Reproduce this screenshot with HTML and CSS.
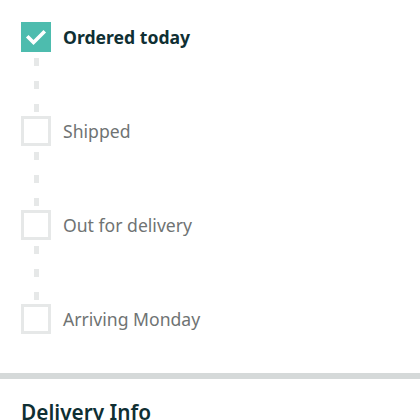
FILE: index.html
```html
<!DOCTYPE html>
<html>
<head>
<meta charset="utf-8">
<link rel="stylesheet" href="styles.css">
</head>
<body>
<div class="tracker">
  <div class="step done">
    <span class="box">
      <svg width="30" height="30" viewBox="0 0 30 30"><path d="M7.5 15.5 L12.5 20.5 L22.5 10.5" fill="none" stroke="#fff" stroke-width="3.6" stroke-linecap="square" stroke-linejoin="miter"/></svg>
    </span>
    <span class="label">Ordered today</span>
  </div>
  <div class="connector"></div>
  <div class="step">
    <span class="box"></span>
    <span class="label">Shipped</span>
  </div>
  <div class="connector"></div>
  <div class="step">
    <span class="box"></span>
    <span class="label">Out for delivery</span>
  </div>
  <div class="connector"></div>
  <div class="step">
    <span class="box"></span>
    <span class="label">Arriving Monday</span>
  </div>
</div>
<div class="divider"></div>
<h2 class="section-title">Delivery Info</h2>
</body>
</html>
```
FILE: styles.css
```css
html, body {
  margin: 0;
  padding: 0;
  background: #fff;
  font-family: "Noto Sans", "Open Sans", sans-serif;
}
.tracker {
  padding: 22px 0 0 21px;
  display: flex;
  flex-direction: column;
}
.step {
  display: flex;
  align-items: center;
  height: 30px;
}
.box {
  width: 30px;
  height: 30px;
  box-sizing: border-box;
  border: 3px solid #e6e8e8;
  background: #fff;
  flex: none;
}
.step.done .box {
  border: none;
  background: #4dbcae;
}
.box svg { display: block; }
.label {
  margin-left: 12px;
  font-size: 17.6px;
  color: #6f7373;
}
.step.done .label {
  font-weight: 700;
  color: #0f2f33;
}
.connector {
  width: 5px;
  height: 64px;
  margin-left: 12.5px;
  background: repeating-linear-gradient(to bottom, transparent 0 6px, #e6e8e8 6px 14px, transparent 14px 23px);
}
.divider {
  margin-top: 39px;
  height: 6px;
  background: #d5d9d9;
}
.section-title {
  margin: 19px 0 0 21px;
  font-size: 20.8px;
  font-weight: 600;
  color: #0f2f33;
}
```
